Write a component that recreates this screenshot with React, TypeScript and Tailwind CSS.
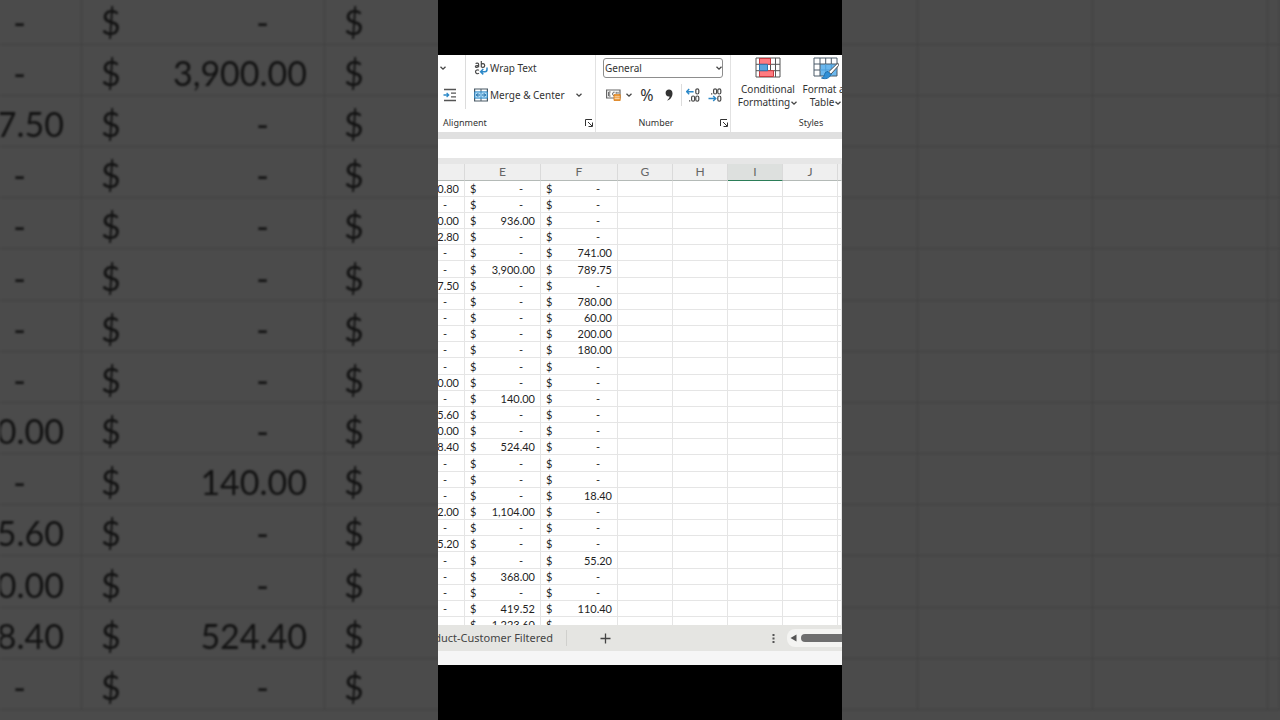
import clsx from "clsx";

type Row = [string, string, string];

const rows: Row[] = [
  ["0.80", "-", "-"],
  ["-", "-", "-"],
  ["0.00", "936.00", "-"],
  ["2.80", "-", "-"],
  ["-", "-", "741.00"],
  ["-", "3,900.00", "789.75"],
  ["7.50", "-", "-"],
  ["-", "-", "780.00"],
  ["-", "-", "60.00"],
  ["-", "-", "200.00"],
  ["-", "-", "180.00"],
  ["-", "-", "-"],
  ["0.00", "-", "-"],
  ["-", "140.00", "-"],
  ["5.60", "-", "-"],
  ["0.00", "-", "-"],
  ["8.40", "524.40", "-"],
  ["-", "-", "-"],
  ["-", "-", "-"],
  ["-", "-", "18.40"],
  ["2.00", "1,104.00", "-"],
  ["-", "-", "-"],
  ["5.20", "-", "-"],
  ["-", "-", "55.20"],
  ["-", "368.00", "-"],
  ["-", "-", "-"],
  ["-", "419.52", "110.40"],
  ["-", "1,223.60", "-"],
];

const backdropRows = rows.slice(4, 18).map(([d, e]): Row => [d, e, ""]);

const headings = ["", "E", "F", "G", "H", "I", "J", ""];

const sheetStyles = {
  normal: {
    table: "text-[11px] text-[#1f1f1f]",
    cols: ["w-[27px]", "w-[76px]", "w-[77px]", "w-[55px]", "w-[55px]", "w-[55px]", "w-[55px]", ""],
    row: "h-4",
    tallRow: "h-[17px]",
    cell: "border-[#e5e5e5]",
    money: "px-[5px]",
    dash: "pr-3",
  },
  large: {
    table: "text-[34px] text-[#121212]",
    cols: ["w-[82px]", "w-[243px]", "w-[243px]", "w-[175px]", "w-[175px]", "w-[175px]", "w-[175px]", ""],
    row: "h-[51px]",
    tallRow: "h-[52px]",
    cell: "border-[#404040]",
    money: "pt-1.5 pl-[19px] pr-[17px]",
    dash: "pr-[38px]",
  },
};

interface SheetProps {
  size: "normal" | "large";
  data: Row[];
  showHeadings?: boolean;
}

function Sheet({ size, data, showHeadings = false }: SheetProps) {
  const s = sheetStyles[size];

  return (
    <table className={clsx("w-full table-fixed border-separate border-spacing-0 font-['Lato',sans-serif] leading-none", s.table)}>
      <colgroup>
        {s.cols.map((width, i) => (
          <col key={i} className={width} />
        ))}
      </colgroup>
      {showHeadings && (
        <thead>
          <tr className="h-[17px]">
            {headings.map((name, i) => (
              <th
                key={i}
                scope="col"
                className={clsx(
                  "border-r border-b border-r-[#dadada] p-0 text-xs leading-none font-normal text-[#666]",
                  name === "I" ? "border-b-[#2b7d58] bg-[#dde0de]" : "border-b-[#b4bab7] bg-[#efefef]"
                )}
              >
                {name}
              </th>
            ))}
          </tr>
        </thead>
      )}
      <tbody>
        {data.map((row, r) => (
          <tr key={r} className={r % 6 === 5 ? s.tallRow : s.row}>
            {s.cols.map((_, c) => (
              <td key={c} className={clsx("border-r border-b p-0", s.cell)}>
                {c < 3 && (
                  <div className={clsx("flex", c === 0 ? "justify-end" : "justify-between", s.money)}>
                    {c > 0 && <span>$</span>}
                    {row[c] && <span className={row[c] === "-" ? s.dash : undefined}>{row[c]}</span>}
                  </div>
                )}
              </td>
            ))}
          </tr>
        ))}
      </tbody>
    </table>
  );
}

function Chevron() {
  return (
    <svg viewBox="0 0 8 8" className="size-2 shrink-0" fill="none" stroke="#444" strokeWidth="1.3">
      <path d="M1.5 2.8 4 5.2l2.5-2.4" />
    </svg>
  );
}

function IndentIcon() {
  return (
    <svg viewBox="0 0 14 14" className="h-3.5 w-3.5 shrink-0" fill="none" strokeWidth="1.3">
      <path d="M1 1.5h12M8 5.200h5M8 8.800h5M1 12.500h12" stroke="#555" />
      <path d="M.5 7h5M3.600 4.900 5.700 7 3.600 9.100" stroke="#2b88c8" />
    </svg>
  );
}

function WrapIcon() {
  return (
    <svg viewBox="0 0 14 14" className="h-3.5 w-3.5 shrink-0" fill="none" strokeWidth="1.2">
      <g stroke="#4a4a4a">
        <path d="M1.600 2.700c.8-.9 3-.9 3 .6v3M4.600 4.300c-1.600 0-3.200.2-3.200 1.200 0 1.300 2.600 1 3.200-.3" />
        <path d="M7.300 0v6.300M7.300 3.500c.7-1.300 3.400-1.200 3.400 1.100s-2.700 2.200-3.400 1" />
        <path d="M4.900 9.400c-.9-1-3.400-.6-3.400 1.400s2.500 2.400 3.400 1.400" />
      </g>
      <path d="M13 6.500v2c0 1.500-.7 2.200-2 2.200H6.800M9.300 8l-2.700 2.700 2.700 2.700" stroke="#2b88c8" strokeWidth="1.5" />
    </svg>
  );
}

function MergeIcon() {
  return (
    <svg viewBox="0 0 14 14" className="h-3.5 w-3.5 shrink-0" fill="none">
      <path d="M.6 1h12.800v12H.6z" fill="#fff" stroke="#4a5a66" strokeWidth="1.2" />
      <path d="M7 1v3M7 10v3" stroke="#4a5a66" />
      <path d="M.8 3.900h12.400v6.200H.8z" fill="#b9e0f7" stroke="#2b88c8" />
      <path d="M2.200 7h3.800M8 7h3.800M4.200 5.200 2.400 7l1.800 1.800M9.800 5.200 11.600 7 9.800 8.800" stroke="#1769a6" />
      <path d="M7 4v6" stroke="#2b88c8" strokeWidth=".8" />
    </svg>
  );
}

function CurrencyIcon() {
  return (
    <svg viewBox="0 0 15 12" className="h-3 w-[15px] shrink-0" fill="none">
      <path d="M.6 1h13.400v8H.6z" stroke="#666" strokeWidth="1.2" />
      <path d="M4.600 3H2.700v4h1.900M2.700 5h1.500M8.600 3.200c-2.600-.8-2.600 4.200 0 3.500M10.200 2.800v2M12 2.800v2" stroke="#555" />
      <path d="M8 5.600h6.200v5.900H8z" fill="#ee9a3a" stroke="#d97c16" strokeWidth=".8" />
      <path d="M8.500 7.800h5.200M8.500 9.600h5.200" stroke="#fff" strokeWidth=".6" />
    </svg>
  );
}

interface DecimalIconProps {
  increase?: boolean;
}

function DecimalIcon({ increase = false }: DecimalIconProps) {
  return (
    <svg viewBox="0 0 14 14" className="h-3.5 w-3.5 shrink-0" fill="none" strokeWidth="1.2">
      {increase ? (
        <>
          <path d="M.6 3.700h7M3.200 1.100.6 3.700l2.600 2.600" stroke="#2b88c8" strokeWidth="1.4" />
          <g stroke="#4a4a4a">
            <rect x="9.800" y=".8" width="3" height="5.200" rx="1.5" />
            <rect x="5.600" y="8" width="3" height="5.200" rx="1.5" />
            <rect x="9.800" y="8" width="3" height="5.200" rx="1.5" />
          </g>
          <path d="M3 12.300h1.300v1.300H3z" fill="#4a4a4a" />
        </>
      ) : (
        <>
          <path d="M.5 10.500h7.300M5.200 7.900l2.600 2.600-2.600 2.600" stroke="#2b88c8" strokeWidth="1.4" />
          <g stroke="#4a4a4a">
            <rect x="5.600" y=".8" width="3" height="5.200" rx="1.5" />
            <rect x="9.800" y=".8" width="3" height="5.200" rx="1.5" />
            <rect x="9.800" y="8" width="3" height="5.200" rx="1.5" />
          </g>
          <path d="M3 5.200h1.300v1.300H3z" fill="#4a4a4a" />
        </>
      )}
    </svg>
  );
}

function ConditionalIcon() {
  return (
    <svg viewBox="0 0 26 21" className="h-[21px] w-[26px]" fill="none">
      <path d="M1 1h24v19H1z" fill="#fff" />
      <path d="M1 1h24v19H1zM1 7.300h24M1 13.700h24M4.500 1v19M15.500 1v19M20.500 1v19" stroke="#555" />
      <path d="M4.500 1.500h11v5.800h-11zM4.500 13.700h14v5.800h-14z" fill="#ff7b80" stroke="#c9393f" />
      <path d="M4.500 7.300h8v6.400h-8z" fill="#5ba4dc" stroke="#2b74ad" />
    </svg>
  );
}

function TableIcon() {
  return (
    <svg viewBox="0 0 26 23" className="h-[23px] w-[26px]" fill="none">
      <path d="M1 1h23v18H1z" fill="#fff" />
      <path d="M7 7h17v12H7z" fill="#6cb8ee" />
      <path d="M1 1h23v18H1zM1 7h23M1 13h6M7 1v18M12.700 1v6M18.300 1v6" stroke="#4b5b68" />
      <path d="M7 13h17M12.700 7v12M18.300 7v12" stroke="#4c9fdb" />
      <path d="M24.800 6 15.500 15l2.300 2.300L25.600 8.500z" fill="#fff" stroke="#555" />
      <path d="M15 14.500c-3 0-3.200 2.500-4 4.500-.5 1.200-1.500 1.800-2.500 2 3.500 1.500 8.500.5 9.300-3.700z" fill="#2f8fd6" stroke="#1d6fae" />
    </svg>
  );
}

interface GroupLabelProps {
  title: string;
  align?: "left" | "center";
  launcher?: boolean;
}

function GroupLabel({ title, align = "center", launcher = false }: GroupLabelProps) {
  return (
    <div className="flex flex-1 items-center gap-1 pt-1 pr-0.5 text-[9px]">
      <span className={clsx("flex-1", align === "left" ? "pl-[5px]" : "text-center")}>{title}</span>
      {launcher && (
        <button type="button" aria-label={`${title} settings`}>
          <svg viewBox="0 0 8 8" className="size-2" fill="none" stroke="#333">
            <path d="M.5 7V.5H7M3 3l4 4M7.500 3.500v4h-4" />
          </svg>
        </button>
      )}
    </div>
  );
}

function Ribbon() {
  return (
    <div className="flex h-[77px] shrink-0 overflow-hidden bg-white font-['Noto_Sans',sans-serif] text-[10px] leading-none text-[#333]">
      <section aria-label="Alignment" className="flex w-[158px] shrink-0 flex-col border-r border-[#e2e2e2]">
        <div className="flex">
          <div className="flex w-7 flex-col border-r border-[#dcdcdc]">
            <button type="button" aria-label="Orientation" className="flex h-[26px] items-center pl-px">
              <Chevron />
            </button>
            <button type="button" aria-label="Increase indent" className="flex h-7 items-center pl-[5px]">
              <IndentIcon />
            </button>
          </div>
          <div className="flex flex-1 flex-col pl-2">
            <button type="button" className="flex h-[26px] items-center gap-0.5 whitespace-nowrap">
              <WrapIcon />
              Wrap Text
            </button>
            <div className="flex h-7 items-center justify-between pr-3">
              <button type="button" className="flex items-center gap-0.5 whitespace-nowrap">
                <MergeIcon />
                Merge &amp; Center
              </button>
              <button type="button" aria-label="Merge options">
                <Chevron />
              </button>
            </div>
          </div>
        </div>
        <GroupLabel title="Alignment" align="left" launcher />
      </section>

      <section aria-label="Number" className="flex w-[135px] shrink-0 flex-col border-r border-[#e2e2e2]">
        <div className="flex h-[26px] items-center px-[7px]">
          <label className="relative flex w-full items-center">
            <span className="sr-only">Number format</span>
            <select className="h-5 w-full appearance-none rounded-[3px] border border-[#8d8d8d] bg-white px-px text-[10px] leading-none">
              <option>General</option>
            </select>
            <span className="pointer-events-none absolute right-0">
              <Chevron />
            </span>
          </label>
        </div>
        <div className="flex h-7 items-center pl-2.5">
          <button type="button" aria-label="Accounting number format" className="flex items-center gap-1">
            <CurrencyIcon />
            <Chevron />
          </button>
          <button type="button" className="w-7 text-center text-base leading-none">
            %
          </button>
          <button type="button" aria-label="Comma style" className="flex w-4 justify-center">
            <svg viewBox="0 0 8 12" className="h-3 w-2" fill="#333">
              <path d="M4 .5c2 0 3.500 1.500 3.500 4 0 3.500-2.500 6.500-5.500 7 1.500-1.200 2.500-2.500 2.600-4C2 8 .6 6 .6 4S2 .5 4 .5z" />
            </svg>
          </button>
          <div className="ml-1 flex h-[22px] items-center gap-2 border-l border-[#dcdcdc] pl-1">
            <button type="button" aria-label="Increase decimal">
              <DecimalIcon increase />
            </button>
            <button type="button" aria-label="Decrease decimal">
              <DecimalIcon />
            </button>
          </div>
        </div>
        <GroupLabel title="Number" launcher />
      </section>

      <section aria-label="Styles" className="flex w-[162px] shrink-0 flex-col">
        <div className="flex h-[54px] gap-1 pl-2">
          <button type="button" className="flex w-[58px] flex-col items-center pt-0.5">
            <span className="flex h-[26px] shrink-0">
              <ConditionalIcon />
            </span>
            <span className="leading-[13px]">Conditional</span>
            <span className="flex items-center leading-[13px]">
              Formatting <Chevron />
            </span>
          </button>
          <button type="button" className="flex w-[50px] flex-col items-center pt-0.5">
            <span className="flex h-[26px] shrink-0">
              <TableIcon />
            </span>
            <span className="leading-[13px] whitespace-nowrap">Format as</span>
            <span className="flex items-center leading-[13px]">
              Table <Chevron />
            </span>
          </button>
        </div>
        <GroupLabel title="Styles" />
      </section>
    </div>
  );
}

function SheetTabs() {
  return (
    <div className="flex h-[26px] shrink-0 items-center bg-[#e5e5e2] text-[#444]">
      <div className="flex h-4 w-[129px] justify-end border-r border-[#d0d0cd] pr-[13px]">
        <button type="button" className="font-['Noto_Sans',sans-serif] text-[11px] leading-4 whitespace-nowrap">
          duct-Customer Filtered
        </button>
      </div>
      <button type="button" aria-label="New sheet" className="ml-[33px]">
        <svg viewBox="0 0 11 11" className="size-[11px]" stroke="#444" strokeWidth="1.3">
          <path d="M5.500 .5v10M.5 5.500h10" />
        </svg>
      </button>
      <div className="ml-auto flex items-center gap-3">
        <svg viewBox="0 0 3 11" className="h-[11px] w-[3px]" fill="#555">
          <path d="M.5 1h2v2h-2zM.5 4.500h2v2h-2zM.5 8h2v2h-2z" />
        </svg>
        <div className="flex h-[18px] w-[55px] items-center rounded-l-lg bg-[#f4f4f2] pl-[3px]">
          <button type="button" aria-label="Scroll left">
            <svg viewBox="0 0 7 8" className="h-2 w-[7px]" fill="#555">
              <path d="M6.500 .5v7L.5 4z" />
            </svg>
          </button>
          <div className="ml-1 h-2 flex-1 rounded-l-full bg-[#6e6e6e]" />
        </div>
      </div>
    </div>
  );
}

export default function App() {
  return (
    <main className="grid h-screen overflow-hidden bg-[#4b4b4b]">
      {/* Enlarged, dimmed copy of the sheet behind the portrait frame */}
      <div aria-hidden="true" className="col-start-1 row-start-1 -mt-1.5 overflow-hidden blur-[1px]">
        <Sheet size="large" data={backdropRows} />
      </div>

      <div className="z-10 col-start-1 row-start-1 mx-auto flex aspect-[404/720] h-screen flex-col overflow-hidden bg-black py-[55px]">
        <Ribbon />
        <div className="h-[26px] shrink-0 border-t-[7px] border-[#e0e0e0] bg-white" />
        <div className="h-1.5 shrink-0 bg-[#e6e6e6]" />
        <div className="min-h-0 flex-1 overflow-hidden bg-white">
          <Sheet size="normal" data={rows} showHeadings />
        </div>
        <SheetTabs />
        <div className="h-3.5 shrink-0 bg-[#f6f6f6]" />
      </div>
    </main>
  );
}
